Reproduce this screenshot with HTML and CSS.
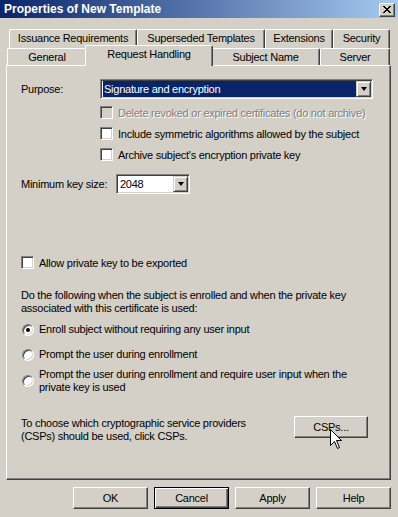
FILE: index.html
```html
<!DOCTYPE html>
<html lang="en">
<head>
    <meta charset="UTF-8">
    <title>Properties of New Template</title>
    <link rel="stylesheet" href="styles.css">
</head>
<body>
    <div class="window">
        <div class="titlebar">
            <span class="title-text">Properties of New Template</span>
            <span class="close-button">
                <svg width="8" height="7" viewBox="0 0 8 7"><path d="M0 0 L7 7 M1 0 L8 7 M7 0 L0 7 M8 0 L1 7" stroke="#000" stroke-width="1"/></svg>
            </span>
        </div>

        <div class="tabstrip">
            <div class="tab-row upper">
                <div class="tab w-issuance">Issuance Requirements</div>
                <div class="tab w-superseded">Superseded Templates</div>
                <div class="tab w-extensions">Extensions</div>
                <div class="tab w-security">Security</div>
            </div>
            <div class="tab-row lower">
                <div class="tab w-general">General</div>
                <div class="tab selected w-request">Request Handling</div>
                <div class="tab w-subject">Subject Name</div>
                <div class="tab w-server">Server</div>
            </div>
        </div>

        <div class="panel">
            <div class="row purpose-row">
                <span class="label">Purpose:</span>
                <div class="combo purpose-combo">
                    <span class="combo-value highlighted">Signature and encryption</span>
                    <span class="combo-arrow"><span class="arrow-glyph"></span></span>
                </div>
            </div>

            <div class="check-group">
                <div class="check-row disabled">
                    <span class="checkbox"></span>
                    <span>Delete revoked or expired certificates (do not archive)</span>
                </div>
                <div class="check-row">
                    <span class="checkbox"></span>
                    <span>Include symmetric algorithms allowed by the subject</span>
                </div>
                <div class="check-row">
                    <span class="checkbox"></span>
                    <span>Archive subject's encryption private key</span>
                </div>
            </div>

            <div class="row keysize-row">
                <span class="label">Minimum key size:</span>
                <div class="combo keysize-combo">
                    <span class="combo-value">2048</span>
                    <span class="combo-arrow"><span class="arrow-glyph"></span></span>
                </div>
            </div>

            <div class="check-row export-row">
                <span class="checkbox"></span>
                <span>Allow private key to be exported</span>
            </div>

            <p class="enroll-text">Do the following when the subject is enrolled and when the private key associated with this certificate is used:</p>

            <div class="radio-row first">
                <span class="radio checked"></span>
                <span>Enroll subject without requiring any user input</span>
            </div>
            <div class="radio-row">
                <span class="radio"></span>
                <span>Prompt the user during enrollment</span>
            </div>
            <div class="radio-row two-line">
                <span class="radio"></span>
                <span>Prompt the user during enrollment and require user input when the private key is used</span>
            </div>

            <div class="csp-row">
                <p class="csp-text">To choose which cryptographic service providers (CSPs) should be used, click CSPs.</p>
                <button class="btn csp-button">CSPs...</button>
                <svg class="cursor" width="13" height="21" viewBox="0 0 13 21">
                    <path d="M0.5 0.5 L0.5 16.5 L4.5 12.5 L7.5 19.5 L9.5 18.5 L6.5 11.5 L11.5 11.5 Z" fill="#fff" stroke="#000" stroke-width="1"/>
                </svg>
            </div>
        </div>

        <div class="dialog-buttons">
            <button class="btn">OK</button>
            <button class="btn default">Cancel</button>
            <button class="btn">Apply</button>
            <button class="btn">Help</button>
        </div>
    </div>
</body>
</html>
```

FILE: styles.css
```css
body {
    margin: 0;
    background-color: #d4d0c8;
    font-family: "Liberation Sans", Arial, sans-serif;
    font-size: 11px;
    letter-spacing: -0.25px;
    color: #000;
}
.window {
    width: 398px;
    height: 517px;
    position: relative;
    overflow: hidden;
}
.titlebar {
    height: 18px;
    display: flex;
    align-items: center;
    justify-content: space-between;
    padding: 0 3px 0 4px;
    background: linear-gradient(to right, #0a246a, #a6caf0);
}
.title-text {
    color: #fff;
    font-weight: bold;
    font-size: 12px;
    letter-spacing: 0;
}
.close-button {
    width: 14px;
    height: 12px;
    margin-top: 1px;
    display: flex;
    align-items: center;
    justify-content: center;
    background-color: #d4d0c8;
    border: 1px solid;
    border-color: #fff #404040 #404040 #fff;
    box-shadow: inset -1px -1px #808080;
}

/* tabs */
.tabstrip {
    margin-top: 11px;
    position: relative;
    z-index: 1;
}
.tab-row {
    display: flex;
}
.tab-row.upper {
    height: 19px;
    padding-left: 9px;
}
.tab-row.lower {
    height: 17px;
    padding-left: 7px;
}
.tab {
    box-sizing: border-box;
    background-color: #d4d0c8;
    border-top: 1px solid #fff;
    border-left: 1px solid #fff;
    border-right: 1px solid #404040;
    box-shadow: inset -1px 0 #808080;
    border-radius: 2px 2px 0 0;
    text-align: center;
    line-height: 17px;
    white-space: nowrap;
}
.tab.selected {
    margin: -3px -2px -1px;
    height: 21px;
    position: relative;
    z-index: 2;
    line-height: 17px;
}
.w-issuance { width: 128px; }
.w-superseded { width: 128px; }
.w-extensions { width: 68px; }
.w-security { width: 57px; }
.w-general { width: 80px; }
.w-request { width: 128px; }
.w-subject { width: 109px; }
.w-server { width: 70px; }

/* panel */
.panel {
    box-sizing: border-box;
    width: 385px;
    height: 415px;
    margin-left: 6px;
    padding-left: 14px;
    border: 1px solid;
    border-color: #fff #404040 #404040 #fff;
    box-shadow: inset -1px -1px #808080;
}
.row {
    display: flex;
    align-items: center;
}
.label {
    width: 79px;
}
.purpose-row {
    margin-top: 13px;
}
.keysize-row {
    margin-top: 13px;
}
.keysize-row .label {
    width: 95px;
}
.combo {
    box-sizing: border-box;
    height: 20px;
    display: flex;
    align-items: center;
    background-color: #fff;
    border: 1px solid;
    border-color: #808080 #fff #fff #808080;
    box-shadow: inset 1px 1px #404040, inset -1px -1px #d4d0c8;
    padding: 1px 1px 1px 2px;
}
.purpose-combo {
    width: 273px;
}
.keysize-combo {
    width: 74px;
}
.combo-value {
    flex: 1;
    height: 16px;
    line-height: 16px;
    padding-left: 1px;
}
.combo-value.highlighted {
    background-color: #0a246a;
    color: #fff;
}
.combo-arrow {
    box-sizing: border-box;
    width: 15px;
    height: 16px;
    display: flex;
    align-items: center;
    justify-content: center;
    background-color: #d4d0c8;
    border: 1px solid;
    border-color: #d4d0c8 #404040 #404040 #d4d0c8;
    box-shadow: inset 1px 1px #fff, inset -1px -1px #808080;
}
.arrow-glyph {
    width: 0;
    height: 0;
    border-left: 3.5px solid transparent;
    border-right: 3.5px solid transparent;
    border-top: 4px solid #000;
}

/* checkboxes */
.check-group {
    margin-left: 79px;
    margin-top: 7px;
    display: flex;
    flex-direction: column;
    gap: 8px;
}
.check-row {
    display: flex;
    align-items: center;
    height: 13px;
    gap: 5px;
}
.checkbox {
    box-sizing: border-box;
    width: 13px;
    height: 13px;
    flex-shrink: 0;
    background-color: #fff;
    border: 1px solid;
    border-color: #808080 #fff #fff #808080;
    box-shadow: inset 1px 1px #404040, inset -1px -1px #d4d0c8;
}
.check-row.disabled {
    color: #808080;
    text-shadow: 1px 1px 0 #fff;
}
.check-row.disabled .checkbox {
    background-color: #d4d0c8;
}
.export-row {
    margin-top: 62px;
}
.enroll-text {
    margin: 20px 0 0;
    width: 345px;
    line-height: 13px;
}

/* radios */
.radio-row {
    display: flex;
    align-items: center;
    gap: 5px;
    min-height: 13px;
    line-height: 13px;
    margin-top: 12px;
    padding-left: 1px;
}
.radio-row.first {
    margin-top: 8px;
}
.radio-row.two-line {
    margin-top: 7px;
    width: 330px;
}
.radio {
    box-sizing: border-box;
    width: 12px;
    height: 12px;
    flex-shrink: 0;
    border-radius: 50%;
    background-color: #fff;
    border: 1px solid;
    border-color: #808080 #fff #fff #808080;
    box-shadow: inset 1px 1px #404040, inset -1px -1px #d4d0c8;
    display: flex;
    align-items: center;
    justify-content: center;
}
.radio.checked::after {
    content: "";
    width: 4px;
    height: 4px;
    border-radius: 50%;
    background-color: #000;
}

/* CSP row */
.csp-row {
    display: flex;
    align-items: flex-start;
    margin-top: 22px;
    position: relative;
}
.csp-text {
    margin: 0 33px 0 0;
    width: 240px;
    line-height: 13px;
    padding-top: 1px;
}
.btn {
    box-sizing: border-box;
    width: 75px;
    height: 22px;
    padding: 0;
    font-family: inherit;
    font-size: 11px;
    letter-spacing: inherit;
    color: #000;
    background-color: #d4d0c8;
    border: 1px solid;
    border-color: #fff #404040 #404040 #fff;
    box-shadow: inset -1px -1px #808080;
    border-radius: 0;
}
.btn.default {
    border-color: #000;
    box-shadow: inset 1px 1px #fff, inset -1px -1px #404040, inset -2px -2px #808080;
}
.csp-button {
    width: 74px;
}
.cursor {
    position: absolute;
    left: 309px;
    top: 13px;
}
.dialog-buttons {
    display: flex;
    justify-content: flex-end;
    gap: 6px;
    width: 391px;
    margin-top: 7px;
}
```
